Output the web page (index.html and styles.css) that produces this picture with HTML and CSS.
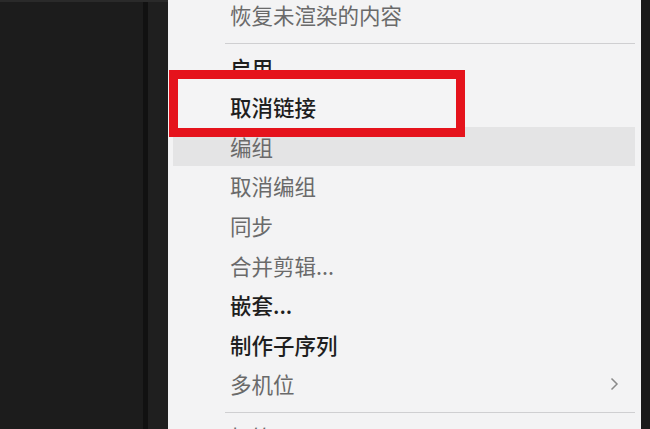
FILE: index.html
```html
<!DOCTYPE html>
<html lang="zh-CN">
<head>
<meta charset="utf-8">
<title>上下文菜单</title>
<link rel="stylesheet" href="styles.css">
</head>
<body>
<div class="screen">
  <div class="panel-left">
    <div class="panel-main"></div>
    <div class="panel-edge"></div>
    <div class="panel-gap"></div>
  </div>
  <div class="menu">
    <ul class="list">
      <li class="item disabled">恢复未渲染的内容</li>
      <li class="sep"></li>
      <li class="item">启用</li>
      <li class="item focus">取消链接</li>
      <li class="item disabled hover">编组</li>
      <li class="item disabled">取消编组</li>
      <li class="item disabled">同步</li>
      <li class="item disabled">合并剪辑...</li>
      <li class="item">嵌套...</li>
      <li class="item">制作子序列</li>
      <li class="item disabled sub">多机位<span class="chev"><svg width="9" height="14" viewBox="0 0 9 14"><path d="M1.5 1.5 L7 7 L1.5 12.5" fill="none" stroke="#8a8a8a" stroke-width="1.5"/></svg></span></li>
      <li class="sep"></li>
      <li class="item disabled">标签</li>
    </ul>
    <div class="highlight-box"></div>
  </div>
  <div class="panel-right"></div>
</div>
</body>
</html>
```

FILE: styles.css
```css
html, body {
  margin: 0;
  padding: 0;
  width: 650px;
  height: 429px;
  overflow: hidden;
  background: #1b1b1b;
}

.screen {
  display: flex;
  width: 650px;
  height: 429px;
  font-family: "Noto Sans CJK SC", "Noto Sans", sans-serif;
}

.panel-left {
  display: flex;
  width: 168px;
  flex: none;
  border-top: 2px solid #2a2a2a;
  box-sizing: border-box;
}

.panel-main {
  width: 143px;
  background: #1c1c1c;
}

.panel-edge {
  width: 5px;
  background: #111111;
}

.panel-gap {
  flex: 1;
  background: #1f1f1f;
}

.menu {
  position: relative;
  flex: 1;
  background: #f3f3f4;
  overflow: hidden;
}

.list {
  list-style: none;
  margin: -5px 0 0 0;
  padding: 0;
}

.item {
  position: relative;
  height: 39.6px;
  line-height: 39.6px;
  padding-left: 62px;
  margin: 0 6px 0 0;
  font-size: 21.5px;
  color: #1e1e1e;
  font-weight: 500;
  white-space: nowrap;
}

.item.disabled {
  color: #6a6a6a;
  font-weight: normal;
}

.item.hover {
  background: #e4e4e5;
  margin-left: 5px;
  padding-left: 57px;
}

.item.focus {
  z-index: 2;
}

.item.sub {
  display: flex;
  align-items: center;
  justify-content: space-between;
}

.chev {
  display: flex;
  margin-right: 16px;
}

.sep {
  height: 1px;
  background: #cfcfd1;
  margin: 8px 6px 4px 57px;
}

.highlight-box {
  position: absolute;
  left: 1px;
  top: 70px;
  width: 296px;
  height: 67px;
  box-sizing: border-box;
  border: 9.5px solid #e5131c;
  background: #f4f4f5;
  z-index: 1;
}

.panel-right {
  width: 9px;
  flex: none;
  background: #1a1a1a;
}
```
